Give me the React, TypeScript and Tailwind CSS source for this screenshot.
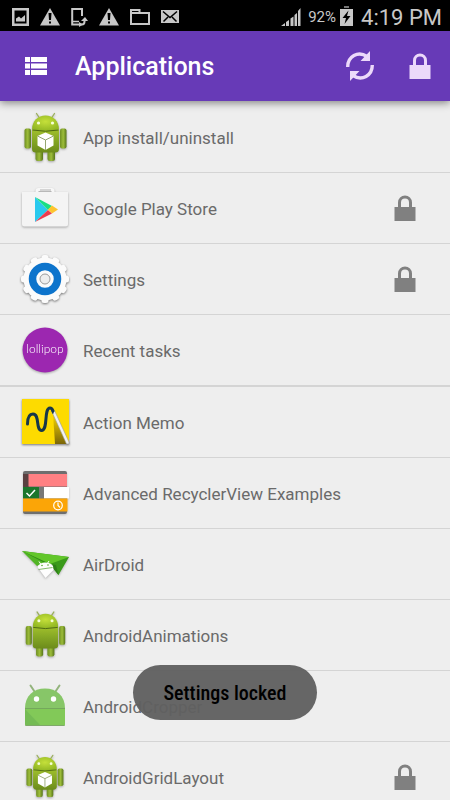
import type { ReactNode } from "react";

type AppItem = {
    name: string;
    icon: ReactNode;
    locked?: boolean;
    sectionEnd?: boolean;
};

const apps: AppItem[] = [
    { name: "App install/uninstall", icon: <DroidIcon cube /> },
    { name: "Google Play Store", icon: <PlayStoreIcon />, locked: true },
    { name: "Settings", icon: <SettingsIcon />, locked: true },
    { name: "Recent tasks", icon: <LollipopIcon />, sectionEnd: true },
    { name: "Action Memo", icon: <MemoIcon /> },
    { name: "Advanced RecyclerView Examples", icon: <RecyclerIcon /> },
    { name: "AirDroid", icon: <AirDroidIcon /> },
    { name: "AndroidAnimations", icon: <DroidIcon size="medium" /> },
    { name: "AndroidCropper", icon: <DroidHeadIcon /> },
    { name: "AndroidGridLayout", icon: <DroidIcon cube size="small" />, locked: true },
];

export default function App() {
    return (
        <div className="relative flex h-screen flex-col overflow-hidden bg-[#eeeeee] font-[Roboto,sans-serif]">
            <StatusBar />

            {/* Toolbar */}
            <header className="z-10 flex h-[70px] shrink-0 items-center bg-[#673ab7] pr-[19px] pl-6 shadow-[0_2px_8px_rgba(0,0,0,0.45)]">
                <button type="button" aria-label="Menu">
                    <MenuIcon />
                </button>
                <h1 className="ml-[27px] pt-0.5 text-[25px] leading-8 font-medium text-white">Applications</h1>
                <div className="ml-auto flex items-center gap-[34px] text-[#ecd9fa]">
                    <button type="button" aria-label="Refresh">
                        <RefreshIcon />
                    </button>
                    <button type="button" aria-label="Lock all">
                        <LockIcon />
                    </button>
                </div>
            </header>

            {/* App list */}
            <ul className="min-h-0 flex-1 overflow-hidden pt-px">
                {apps.map((app) => (
                    <AppRow key={app.name} app={app} />
                ))}
            </ul>

            {/* Toast */}
            <div className="pointer-events-none absolute inset-x-0 bottom-20 z-20 flex justify-center">
                <div
                    role="status"
                    className="flex h-[55px] items-center rounded-full bg-[#606060]/96 px-[31px] font-['Roboto_Condensed','Liberation_Sans_Narrow',Roboto,sans-serif] text-xl font-medium text-black"
                >
                    Settings locked
                </div>
            </div>
        </div>
    );
}

function AppRow({ app }: { app: AppItem }) {
    return (
        <li className={`border-[#d4d4d4] ${app.sectionEnd ? "border-b-2" : "border-b"}`}>
            <button type="button" className="flex h-[70px] w-full items-center pr-[34px] pl-5 text-left">
                {app.icon}
                <span className="ml-[13px] flex-1 pt-0.5 text-[17px] leading-7 text-[#6a6a6a]">{app.name}</span>
                {app.locked && (
                    <span className="text-[#808080]">
                        <LockIcon />
                    </span>
                )}
            </button>
        </li>
    );
}

function StatusBar() {
    return (
        <div className="flex h-[31px] shrink-0 items-center justify-between bg-black pr-2 pl-3 text-[#c8c8c8]">
            <div className="flex items-center gap-[11px] pt-0.5">
                <svg width="17" height="20" viewBox="0 0 17 20" fill="currentColor">
                    <path fillRule="evenodd" d="M0 1h17v18H0zM2.500 3.500v13h12v-13z" />
                    <path d="M4 14.500v-3l3-2 2 2 4-3.500v6.500z" />
                </svg>
                <WarningIcon />
                <svg width="17" height="20" viewBox="0 0 17 20" fill="none" stroke="currentColor">
                    <path d="M11 9V2H1.200v15.500H8" strokeWidth="2" />
                    <path d="M1 14.500h7" strokeWidth="1.500" />
                    <path d="M9.500 17.500h1.500c2 0 2.500-1 2.500-3v-2" strokeWidth="2" />
                    <path d="M10 14l4-4 3 4zM8 15l4 2.500L8 20z" fill="currentColor" stroke="none" />
                </svg>
                <WarningIcon />
                <svg width="20" height="20" viewBox="0 0 20 20" fill="none" stroke="currentColor" strokeWidth="2">
                    <path d="M1 17V3h8.500v3H19v11z" />
                    <path d="M1 6h9" />
                </svg>
                <svg width="18" height="20" viewBox="0 0 18 20">
                    <path d="M0 3h18v13H0z" fill="currentColor" />
                    <path d="M2 4.500l7 6 7-6M2.500 14.500l4.500-4.500M15.500 14.500L11 10" fill="none" stroke="#000" strokeWidth="1.500" />
                </svg>
            </div>
            <div className="flex items-center pt-0.5">
                <svg width="21" height="20" viewBox="0 0 21 20" fill="currentColor">
                    <path d="M1 19l4-3v3zM6 15l3-2v6H6zM10.500 11.500l3-2V19h-3zM14.500 8l2.500-2v13h-2.500zM18 4l2.500-3v18H18z" />
                </svg>
                <span className="ml-[7px] text-[15px] leading-5">92%</span>
                <svg className="ml-1" width="13" height="21" viewBox="0 0 13 21">
                    <path d="M4 0h5v2H4z" fill="#777" />
                    <path d="M0 3h13v17H0z" fill="currentColor" />
                    <path d="M8.500 4.500L2.500 12h3.500l-1.500 6 6-8H7z" fill="#000" />
                </svg>
                <span className="ml-2 pt-0.5 text-[22px] leading-6">4:19 PM</span>
            </div>
        </div>
    );
}

function WarningIcon() {
    return (
        <svg width="20" height="20" viewBox="0 0 20 20">
            <path d="M10 1l10 17.500H0z" fill="currentColor" />
            <path d="M8.500 6h3L11 13H9zM9 14.500h2v2H9z" fill="#000" />
        </svg>
    );
}

function MenuIcon() {
    return (
        <svg width="24" height="20" viewBox="0 0 24 20" fill="#fff">
            <path d="M1 1h5v5H1zM7 1h16v5H7zM1 7.500h5v5H1zM7 7.500h16v5H7zM1 14h5v5H1zM7 14h16v5H7z" />
        </svg>
    );
}

function RefreshIcon() {
    return (
        <svg width="30" height="32" viewBox="0 0 30 32" fill="none" stroke="currentColor" strokeWidth="3.400">
            <path d="M2.700 17C2.700 6.500 13 .5 22 6.500" />
            <path d="M27.300 15C27.300 25.500 17 31.500 8 25.500" />
            <path d="M25 1v10H15.500zM5 31V21h9.500z" fill="currentColor" stroke="none" />
        </svg>
    );
}

function LockIcon() {
    return (
        <svg width="22" height="26" viewBox="0 0 22 26">
            <path d="M5.500 13V7.500a5.500 5.500 0 0 1 11 0V13" fill="none" stroke="currentColor" strokeWidth="3" />
            <path d="M.5 12h21v14H.5z" fill="currentColor" />
        </svg>
    );
}

const droidScale = {
    large: "",
    medium: "translate(1.500 0.500) scale(0.94)",
    small: "translate(2.500 2) scale(0.88)",
};

function DroidIcon({ cube, size = "large" }: { cube?: boolean; size?: keyof typeof droidScale }) {
    return (
        <svg width="50" height="50" viewBox="0 0 50 50" className="drop-shadow-[0_1px_1px_rgba(0,0,0,0.3)]">
            <defs>
                <linearGradient id="droidBody" x2="0" y2="1">
                    <stop offset="0" stopColor="#a0bf2c" />
                    <stop offset="0.5" stopColor="#84a624" />
                    <stop offset="1" stopColor="#6c8b1b" />
                </linearGradient>
                <linearGradient id="droidLimb">
                    <stop offset="0" stopColor="#6f8f22" />
                    <stop offset="0.5" stopColor="#9dbd3a" />
                    <stop offset="1" stopColor="#58761a" />
                </linearGradient>
                <radialGradient id="droidHead" cx="0.5" cy="0.4" r="0.6">
                    <stop offset="0" stopColor="#c5e03a" />
                    <stop offset="1" stopColor="#93b824" />
                </radialGradient>
            </defs>
            <g transform={droidScale[size]}>
                <path d="M16.500 1.500l3 4.500M34.500 1.500l-3 4.500" stroke="#9aaf5c" strokeWidth="1.300" strokeLinecap="round" />
                <rect x="15.500" y="36" width="7.500" height="13" rx="2.500" fill="url(#droidLimb)" />
                <rect x="27.500" y="36" width="7.500" height="13" rx="2.500" fill="url(#droidLimb)" />
                <rect x="4.500" y="16.500" width="6.500" height="20" rx="2" fill="url(#droidLimb)" />
                <rect x="40" y="16.500" width="6.500" height="20" rx="2" fill="url(#droidLimb)" />
                <path d="M12 17.500h27V37q0 3.500-4 3.500H16q-4 0-4-3.500z" fill="url(#droidBody)" />
                <path d="M12 17.500C12 9 18 3.500 25.500 3.500S39 9 39 17.500q-13 2.500-27 0z" fill="url(#droidHead)" />
                <path d="M12.500 18q13 2.500 26 0" fill="none" stroke="#4c6612" strokeWidth="1" />
                <circle cx="18.500" cy="11" r="1.600" fill="#f6ffd8" />
                <circle cx="32.500" cy="11" r="1.600" fill="#f6ffd8" />
                {cube && (
                    <>
                        <path d="M25.500 20.500l8 3.500v9.500l-8 4.500-8-4.500V24z" fill="#fff" />
                        <path d="M17.500 24l8 4 8-4M25.500 28v10" fill="none" stroke="#8a9c62" strokeWidth="0.900" />
                    </>
                )}
            </g>
        </svg>
    );
}

function PlayStoreIcon() {
    return (
        <svg width="50" height="50" viewBox="0 0 50 50" className="drop-shadow-[0_1px_1px_rgba(0,0,0,0.3)]">
            <path d="M17 10V8q0-1.500 1.500-1.500h13Q33 6.500 33 8v2" fill="none" stroke="#f7f7f7" strokeWidth="3" />
            <path d="M20 7h11" stroke="#c9c9c9" strokeWidth="1.500" />
            <path d="M2 9h46v32q0 2.500-2.500 2.500h-41q-2.500 0-2.500-2.500z" fill="#f4f4f4" />
            <path d="M15 14l13 13-13 12z" fill="#29c9ee" />
            <path d="M15 14l17 9-4 4z" fill="#19df83" />
            <path d="M15 39l13-12 4 3.500z" fill="#ee3b4e" />
            <path d="M32 22.500l6 4-6 4-4-4z" fill="#fdc42f" />
        </svg>
    );
}

function SettingsIcon() {
    return (
        <svg width="50" height="50" viewBox="0 0 50 50" className="drop-shadow-[0_1px_1px_rgba(0,0,0,0.5)]">
            <circle cx="25" cy="25" r="21.500" fill="#fbfbfb" />
            {Array.from({ length: 12 }, (_, i) => (
                <rect
                    key={i}
                    x="21.500"
                    y="1"
                    width="7"
                    height="10"
                    rx="2.500"
                    fill="#fbfbfb"
                    transform={`rotate(${i * 30} 25 25)`}
                />
            ))}
            <circle cx="25" cy="25" r="12.500" fill="none" stroke="#0d74cc" strokeWidth="7.500" />
            <circle cx="25" cy="25" r="5" fill="#eeeeee" stroke="#9b9b9b" strokeWidth="1" />
        </svg>
    );
}

function LollipopIcon() {
    return (
        <svg width="50" height="50" viewBox="0 0 50 50" className="drop-shadow-[0_1px_1px_rgba(0,0,0,0.3)]">
            <circle cx="25" cy="25" r="22.500" fill="#9c27b0" />
            <text x="25" y="28" textAnchor="middle" fontSize="12" fontWeight="300" fontFamily="Lato, sans-serif" fill="#fff">
                lollipop
            </text>
        </svg>
    );
}

function MemoIcon() {
    return (
        <svg width="50" height="50" viewBox="0 0 50 50" className="drop-shadow-[0_1px_1px_rgba(0,0,0,0.5)]">
            <defs>
                <linearGradient id="penShadow" x2="0" y2="1">
                    <stop offset="0" stopColor="#fddb00" />
                    <stop offset="1" stopColor="#7a6508" />
                </linearGradient>
            </defs>
            <path d="M2 2h47v45H2z" fill="#fddb00" />
            <path d="M33 16l2 31h12z" fill="url(#penShadow)" />
            <path d="M31.500 14l3-.5L49 45v2h-2.500z" fill="#f2f2f2" stroke="#999" strokeWidth="0.600" />
            <path d="M31 12.500l3 3.500-1.500 1z" fill="#17374a" />
            <path
                d="M7.500 27c0-6 2-10 5.500-10 7 0 2.500 16.500 8.500 16.500 7 0 2-22.500 8.500-22.500q2 0 3 3"
                fill="none"
                stroke="#17374a"
                strokeWidth="3"
                strokeLinecap="round"
            />
        </svg>
    );
}

function RecyclerIcon() {
    return (
        <svg width="50" height="50" viewBox="0 0 50 50" className="drop-shadow-[0_1px_1px_rgba(0,0,0,0.2)]">
            <rect x="3" y="3" width="44" height="43" rx="2" fill="#6e6e6e" />
            <path d="M3 6h6v13H3z" fill="#594040" />
            <path d="M8.500 6H47v12.500H8.500z" fill="#ff8083" />
            <path d="M3 19h16v11.500H3z" fill="#1b762c" />
            <path d="M19 19h5v11.500h-5z" fill="#777" />
            <path d="M24 19h25v11.500H24z" fill="#fff" />
            <path d="M3 30.500h44.500v13H3z" fill="#fba507" />
            <path d="M6.500 25l3 3 5.500-6" fill="none" stroke="#fff" strokeWidth="1.500" />
            <circle cx="38" cy="37.500" r="4.300" fill="none" stroke="#fff" strokeWidth="1.200" />
            <path d="M38 34.500v3l2 2" fill="none" stroke="#fff" strokeWidth="1.200" />
        </svg>
    );
}

function AirDroidIcon() {
    return (
        <svg width="50" height="50" viewBox="0 0 50 50" className="drop-shadow-[0_1px_1px_rgba(0,0,0,0.25)]">
            <path d="M2 12l15 15 21-6z" fill="#52b525" />
            <path d="M2 12l24 9 12.500 15L49 18z" fill="#3a9a1a" />
            <path d="M2 12L49 18 30 25z" fill="#62c62a" />
            <path d="M2 12l28 13-5-1z" fill="#2f8716" />
            <path d="M30 25l6 1 2.500 10z" fill="#2d8016" />
            <path d="M17.500 28q1.500-4 7-4.500 6-.5 8.500 3.500l.5 4-8 8z" fill="#fdfdfd" />
            <path d="M19 22.500l2 3M29 22l-2 3" stroke="#fff" strokeWidth="1" />
            <circle cx="22" cy="26.500" r="0.800" fill="#52a72a" />
            <circle cx="28" cy="26" r="0.800" fill="#52a72a" />
            <path d="M18.500 30.500l14-2" stroke="#79b55c" strokeWidth="0.900" />
        </svg>
    );
}

function DroidHeadIcon() {
    return (
        <svg width="50" height="50" viewBox="0 0 50 50">
            <path d="M10.500 4.500l4 6M39.500 4.500l-4 6" stroke="#93b37c" strokeWidth="2" strokeLinecap="round" />
            <path d="M5 27C5 15 13.500 7.500 25 7.500S45 15 45 27v16q0 2-2 2H7q-2 0-2-2z" fill="#87c668" />
            <path d="M5 28h40v15q0 2-2 2H21z" fill="#82c958" />
            <path d="M5 28v15q0 2 2 2h14z" fill="#74bb54" />
            <path d="M5 27.500h40" stroke="#74a85c" strokeWidth="1" />
            <path d="M5.500 44.500h39" stroke="#7fa869" strokeWidth="1" />
            <circle cx="16.500" cy="18" r="2.700" fill="#fff" />
            <circle cx="33.500" cy="18" r="2.700" fill="#fff" />
        </svg>
    );
}
